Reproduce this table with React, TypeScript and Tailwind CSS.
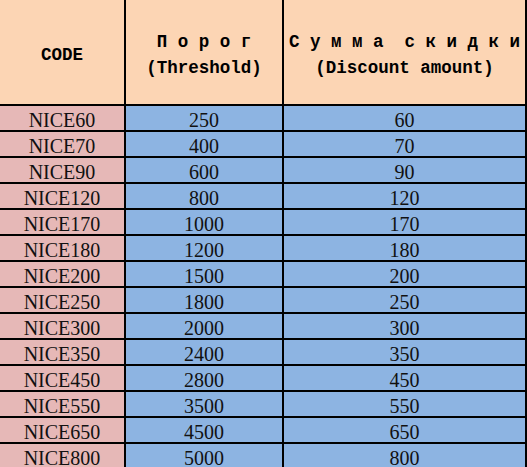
import React from "react";

const rows: [string, string, string][] = [
  ["NICE60", "250", "60"],
  ["NICE70", "400", "70"],
  ["NICE90", "600", "90"],
  ["NICE120", "800", "120"],
  ["NICE170", "1000", "170"],
  ["NICE180", "1200", "180"],
  ["NICE200", "1500", "200"],
  ["NICE250", "1800", "250"],
  ["NICE300", "2000", "300"],
  ["NICE350", "2400", "350"],
  ["NICE450", "2800", "450"],
  ["NICE550", "3500", "550"],
  ["NICE650", "4500", "650"],
  ["NICE800", "5000", "800"],
];

const head =
  "h-[106px] bg-[#fcd5b4] border-r-2 border-b-2 border-black flex flex-col items-center justify-center pt-[6px] font-bold text-[17.5px] leading-[26px] text-black whitespace-pre font-['Liberation_Mono','DejaVu_Sans_Mono',monospace]";
const cell =
  "h-[26px] border-r-2 border-b-2 border-black text-center text-[20px] leading-[28px] text-[#111] font-['Liberation_Serif','DejaVu_Serif',serif]";

export default function App() {
  return (
    <div className="w-[527px] h-[467px] overflow-hidden bg-white">
      <div className="grid grid-cols-[126px_158px_243px] w-[527px]">
        <div className={head}>CODE</div>
        <div className={head}>
          <span>П о р о г</span>
          <span>(Threshold)</span>
        </div>
        <div className={head}>
          <span>С у м м а  с к и д к и</span>
          <span>(Discount amount)</span>
        </div>
        {rows.map(([code, th, amt]) => (
          <React.Fragment key={code}>
            <div className={`${cell} bg-[#e6b8b7]`}>{code}</div>
            <div className={`${cell} bg-[#8db4e2]`}>{th}</div>
            <div className={`${cell} bg-[#8db4e2]`}>{amt}</div>
          </React.Fragment>
        ))}
      </div>
    </div>
  );
}
